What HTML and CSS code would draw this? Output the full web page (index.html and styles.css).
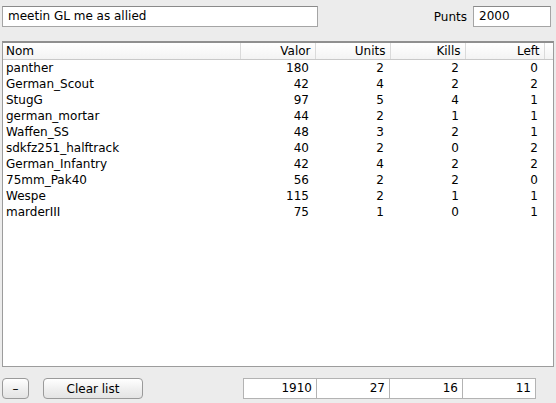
FILE: index.html
```html
<!DOCTYPE html>
<html lang="en">
<head>
	<meta charset="UTF-8">
	<title>Llista</title>
	<link rel="stylesheet" href="styles.css">
</head>
<body>
	<main class="win">
		<header class="top">
			<div class="field name">meetin GL me as allied</div>
			<div class="punts">
				<span class="lbl">Punts</span>
				<div class="field pts">2000</div>
			</div>
		</header>
		<section class="list">
			<table>
				<colgroup>
					<col class="c-nom"><col class="c-num"><col class="c-num"><col class="c-num"><col class="c-left"><col>
				</colgroup>
				<thead>
					<tr><th class="nom">Nom</th><th>Valor</th><th>Units</th><th>Kills</th><th>Left</th><th class="rest"></th></tr>
				</thead>
				<tbody>
					<tr><td class="nom">panther</td><td>180</td><td>2</td><td>2</td><td>0</td><td></td></tr>
					<tr><td class="nom">German_Scout</td><td>42</td><td>4</td><td>2</td><td>2</td><td></td></tr>
					<tr><td class="nom">StugG</td><td>97</td><td>5</td><td>4</td><td>1</td><td></td></tr>
					<tr><td class="nom">german_mortar</td><td>44</td><td>2</td><td>1</td><td>1</td><td></td></tr>
					<tr><td class="nom">Waffen_SS</td><td>48</td><td>3</td><td>2</td><td>1</td><td></td></tr>
					<tr><td class="nom">sdkfz251_halftrack</td><td>40</td><td>2</td><td>0</td><td>2</td><td></td></tr>
					<tr><td class="nom">German_Infantry</td><td>42</td><td>4</td><td>2</td><td>2</td><td></td></tr>
					<tr><td class="nom">75mm_Pak40</td><td>56</td><td>2</td><td>2</td><td>0</td><td></td></tr>
					<tr><td class="nom">Wespe</td><td>115</td><td>2</td><td>1</td><td>1</td><td></td></tr>
					<tr><td class="nom">marderIII</td><td>75</td><td>1</td><td>0</td><td>1</td><td></td></tr>
				</tbody>
			</table>
		</section>
		<footer class="bottom">
			<button class="btn minus">–</button>
			<button class="btn clear">Clear list</button>
			<div class="totals">
				<span>1910</span><span>27</span><span>16</span><span>11</span>
			</div>
		</footer>
	</main>
</body>
</html>
```

FILE: styles.css
```css
body {
	margin: 0;
	background-color: #ececec;
	font: 12px "DejaVu Sans", "Noto Sans", sans-serif;
	color: #000;
}
main.win {
	width: 556px;
	height: 403px;
	display: flex;
	flex-direction: column;
}
/* top */
header.top {
	display: flex;
	justify-content: space-between;
	align-items: center;
	padding: 6px 5px 0 2px;
	height: 21px;
}
.field {
	background-color: #fff;
	border: 1px solid #a5a5a5;
	border-top-color: #8a8a8a;
	height: 19px;
	line-height: 19px;
	padding: 0 5px;
	box-sizing: content-box;
}
.field.name {
	width: 304px;
}
.punts {
	display: flex;
	align-items: center;
	gap: 6px;
}
.field.pts {
	width: 66px;
}
/* list */
section.list {
	margin: 14px 2px 0 2px;
	height: 323px;
	background-color: #fff;
	border: 1px solid #9c9c9c;
	border-top: 2px solid #8f8f8f;
	box-shadow: inset 0 1px 0 #c4c4c4;
}
section.list table {
	border-collapse: collapse;
	table-layout: fixed;
	width: 100%;
}
col.c-nom { width: 237px; }
col.c-num { width: 75px; }
col.c-left { width: 79px; }
section.list th {
	font-weight: normal;
	text-align: right;
	height: 16px;
	line-height: 16px;
	padding: 0 4px 0 0;
	background: linear-gradient(#fff, #f3f3f3);
	border-bottom: 1px solid #c9c9c9;
	border-right: 1px solid #dadada;
}
section.list th.nom,
section.list td.nom {
	text-align: left;
	padding-left: 3px;
}
section.list th.rest {
	border-right: none;
}
section.list td {
	text-align: right;
	height: 16px;
	line-height: 16px;
	padding: 0 6px 0 0;
	white-space: nowrap;
}
/* bottom */
footer.bottom {
	display: flex;
	align-items: center;
	padding: 11px 0 0 2px;
}
.btn {
	font: 12px "DejaVu Sans", "Noto Sans", sans-serif;
	height: 21px;
	padding: 0;
	border: 1px solid #9a9a9a;
	border-radius: 4px;
	background: linear-gradient(#fff, #ededed 60%, #e4e4e4);
	color: #000;
}
.btn.minus {
	width: 27px;
}
.btn.clear {
	width: 100px;
	margin-left: 14px;
}
.totals {
	display: flex;
	margin-left: 100px;
	background-color: #fff;
	border: 1px solid #b3b3b3;
	height: 19px;
}
.totals span {
	width: 73px;
	text-align: right;
	line-height: 19px;
	padding-right: 4px;
	box-sizing: border-box;
	border-left: 1px solid #b3b3b3;
}
.totals span:first-child {
	border-left: none;
	width: 72px;
}
```
